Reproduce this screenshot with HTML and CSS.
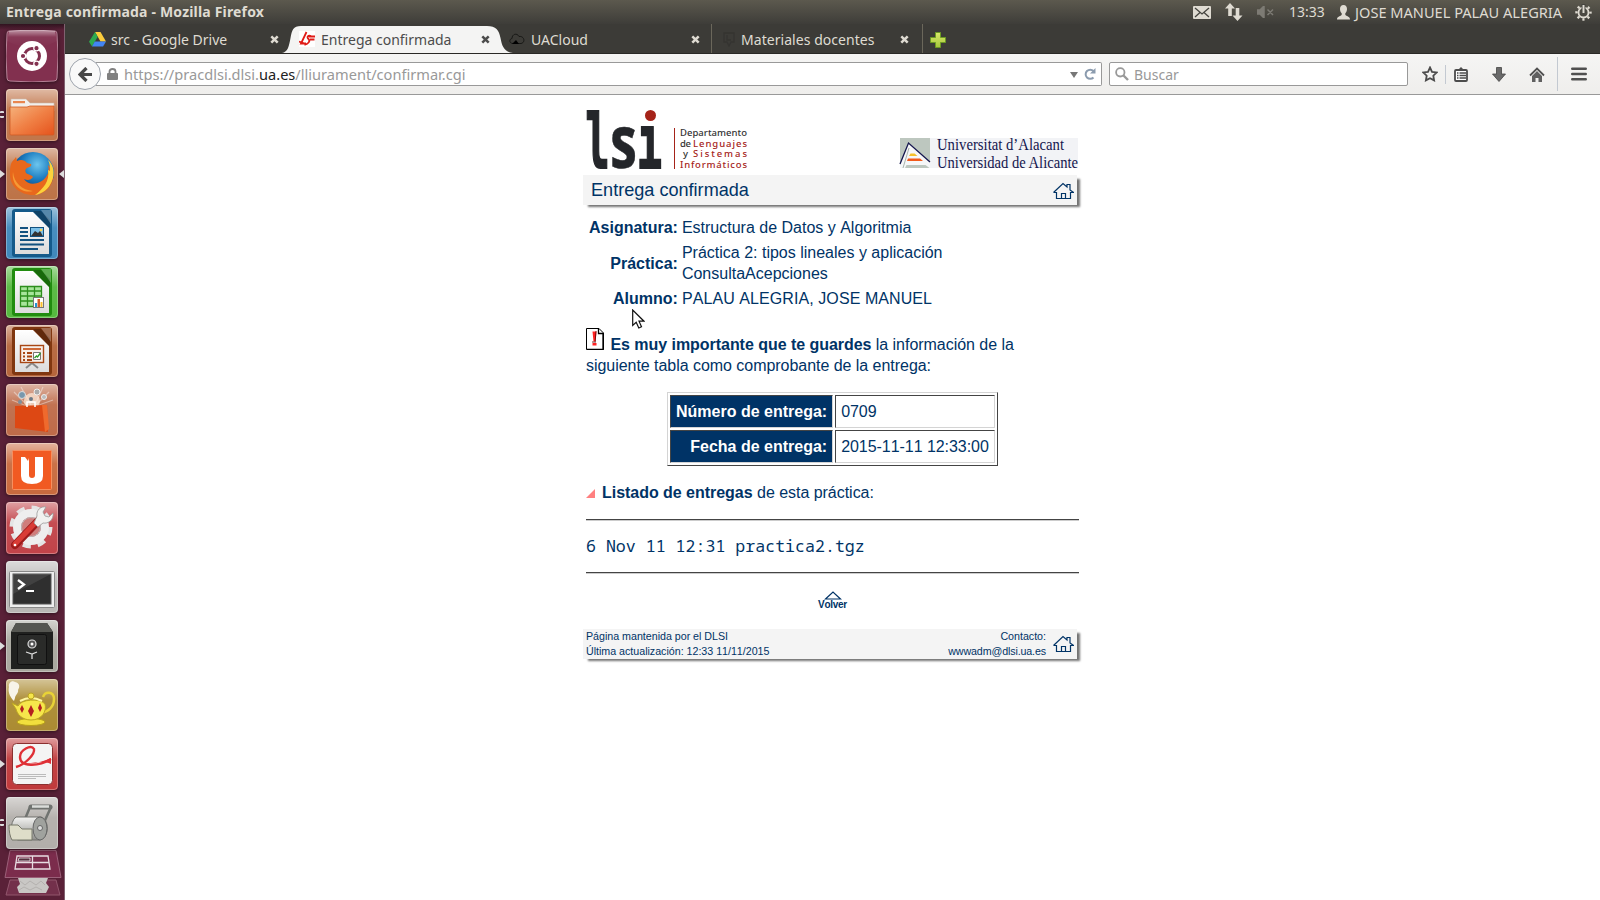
FILE: index.html
```html
<!DOCTYPE html>
<html lang="es">
<head>
<meta charset="utf-8">
<title>Entrega confirmada</title>
<link rel="stylesheet" href="styles.css">
</head>
<body>
<svg width="0" height="0" class="defs">
  <defs>
    <linearGradient id="shine" x1="0" y1="0" x2="0" y2="1"><stop offset="0" stop-color="#fff" stop-opacity=".5"/><stop offset=".4" stop-color="#fff" stop-opacity=".05"/><stop offset="1" stop-color="#fff" stop-opacity="0"/></linearGradient>
    <linearGradient id="folder" x1="0" y1="0" x2="1" y2="1"><stop offset="0" stop-color="#f5b27c"/><stop offset=".5" stop-color="#f08045"/><stop offset="1" stop-color="#e5531c"/></linearGradient>
    <linearGradient id="paper" x1="0" y1="0" x2="0" y2="1"><stop offset="0" stop-color="#fff"/><stop offset="1" stop-color="#dcdcdc"/></linearGradient>
    <linearGradient id="metal" x1="0" y1="0" x2="0" y2="1"><stop offset="0" stop-color="#f4f4f2"/><stop offset="1" stop-color="#8f8f8c"/></linearGradient>
    <radialGradient id="globe" cx=".6" cy=".3" r=".7"><stop offset="0" stop-color="#6cc5ee"/><stop offset=".5" stop-color="#1b7cc0"/><stop offset="1" stop-color="#0c2e68"/></radialGradient>
    <linearGradient id="plus" x1="0" y1="0" x2="0" y2="1"><stop offset="0" stop-color="#d9e86a"/><stop offset="1" stop-color="#a5c63b"/></linearGradient>
    <symbol id="close" viewBox="0 0 9 9"><path d="M1.3 1.3 7.7 7.7M7.7 1.3 1.3 7.7" stroke="currentColor" stroke-width="2.5"/></symbol>
    <symbol id="house" viewBox="0 0 21 18"><path d="M.5 10.500 10 1.500l4 3.500V2.500h3V8l3.500 2.500H17.500v6h-14v-6H.5M8.500 16.500v-5h4v5" fill="none" stroke="#036" stroke-width="1.200"/></symbol>
    <symbol id="shell" viewBox="0 0 52 52"><rect width="52" height="52" rx="4" fill="currentColor"/><rect width="52" height="52" rx="4" fill="url(#shine)"/><rect x=".5" y=".5" width="51" height="51" rx="3.500" fill="none" stroke="#fff" stroke-opacity=".3"/></symbol>
    <symbol id="doc" viewBox="0 0 52 52"><rect x="6" y="2" width="40" height="48" rx="3" fill="currentColor"/><path d="M9 5h18l16 16v26H9z" fill="url(#paper)"/><path d="M27 4h8l9 9v9z" fill="#000" opacity=".25"/><path d="M35 3h10v14z" fill="#fff" opacity=".28"/></symbol>
  </defs>
</svg>

<header class="panel">
  <span class="panel-title">Entrega confirmada - Mozilla Firefox</span>
  <div class="indicators">
    <svg class="i-mail" width="18" height="13" viewBox="0 0 18 13"><rect width="18" height="13" rx="1" fill="#dfdbd2"/><path d="M2 2l7 6 7-6M2 11l5-4.500M16 11l-5-4.500" fill="none" stroke="#45443f" stroke-width="1.300"/></svg>
    <svg class="i-net" width="18" height="18" viewBox="0 0 18 18"><path d="M5 0l5 5.500H6.800V13H3.200V5.500H0zM12.500 18l-5-5.500h3.200V5h3.600v7.500h3.200z" fill="#dfdbd2"/></svg>
    <svg class="i-vol" width="18" height="12" viewBox="0 0 18 12"><path d="M0 4h3l4-4v12L3 8H0zM10.500 3.500l5.500 5.500M16 3.500 10.500 9" fill="#7d7b74" stroke="#7d7b74" stroke-width="1.500"/></svg>
    <span class="clock">13:33</span>
    <svg class="i-user" width="13" height="15" viewBox="0 0 13 15"><path d="M6.500 0C9 0 10 1.700 10 4c0 2-.7 3.300-1.700 4.300v1.500c.8 1.700 4.700 1.200 4.700 4.700H0c0-3.500 3.900-3 4.700-4.700V8.300C3.700 7.300 3 6 3 4c0-2.300 1-4 3.500-4z" fill="#dfdbd2"/></svg>
    <span class="user">JOSE MANUEL PALAU ALEGRIA</span>
    <svg class="i-gear" width="17" height="17" viewBox="0 0 17 17"><circle cx="8.500" cy="8.500" r="5" fill="none" stroke="#dfdbd2" stroke-width="1.800"/><circle cx="8.500" cy="8.500" r="7" fill="none" stroke="#dfdbd2" stroke-width="2.400" stroke-dasharray="2.200 3.298" stroke-dashoffset="1.100"/><path d="M8.500 0v9" stroke="#45443f" stroke-width="4"/><path d="M8.500 1v8" stroke="#dfdbd2" stroke-width="2"/></svg>
  </div>
</header>

<div class="desktop">
  <nav class="launcher">
    <div class="tile"><svg viewBox="0 0 52 52"><path d="M3 1Q26-1 49 1q2 0 2 3 2 22 0 44 0 3-3 3-22 2-44 0-3 0-3-3Q-1 26 1 4q0-3 2-3z" fill="#82304f" stroke="#b58397"/><path d="M3 1Q26-1 49 1l2 10Q26 24 1 11z" fill="url(#shine)"/><circle cx="26" cy="26" r="15" fill="#fff"/><circle cx="26" cy="26" r="7.500" fill="none" stroke="#82304f" stroke-width="3"/><g fill="#82304f" stroke="#fff" stroke-width="1.200"><circle cx="17" cy="26" r="2.700"/><circle cx="30.500" cy="18.200" r="2.700"/><circle cx="30.500" cy="33.800" r="2.700"/></g></svg></div>
    <div class="tile"><i class="run pair"></i><svg viewBox="0 0 52 52" color="#c1764b"><use href="#shell"/><path d="M5 10h15l4 4h24v8H5z" fill="#f2efec" stroke="#c9b8ac" stroke-width=".6"/><path d="M7 12h12v2.200H7z" fill="#e8864f"/><path d="M4 18h17l3-1h24v28q0 1-1 1H5q-1 0-1-1z" fill="url(#folder)" stroke="#cf5a25" stroke-width=".8"/></svg></div>
    <div class="tile"><i class="run"></i><i class="focus"></i><svg viewBox="0 0 52 52" color="#bd7347"><use href="#shell"/><circle cx="27" cy="25" r="21" fill="url(#globe)"/><path d="M5 16c1-3 3-4 5-7l1 4c4-2 8-1 10 2l4 1c1 2-1 3-4 4-2 1-2 3-1 5 2 2 5 1 7 4-2 3-5 4-9 2 4 7 16 6 22-2 3-4 3-8 2-12 4 3 6 9 5 14-2 10-11 16-20 16C14 47 4 38 4 27c0-4 0-8 1-11z" fill="#e8681c"/><path d="M42 12c6 5 7 14 4 21-3 8-10 13-17 14 8-6 15-14 13-25l2 1c0-4 0-7-2-11z" fill="#fbd23c"/><path d="M7 24c1 11 9 18 20 19-11 3-22-6-20-19z" fill="#f69a35"/></svg></div>
    <div class="tile"><svg viewBox="0 0 52 52" color="#3f88bb"><use href="#shell"/><use href="#doc" color="#155a8a"/><path d="M14 21h8M14 25h8M14 29h8M14 33h24M14 37.500h24M14 42h18" stroke="#12517f" stroke-width="2"/><rect x="24.500" y="20.500" width="13" height="9" fill="#7cc0e8" stroke="#12517f"/><path d="M25 29l4-5 3 2 2-2 3 5z" fill="#333"/><circle cx="35" cy="23" r="1.300" fill="#fcd34f"/></svg></div>
    <div class="tile"><svg viewBox="0 0 52 52" color="#55b83e"><use href="#shell"/><use href="#doc" color="#218c0f"/><path d="M14 20.500h22v20H14z" fill="#a8e59b"/><path d="M14.500 20.500h21v20h-21zM14 25h22M14 30h22M14 35h22M21.500 20v21M28.500 20v21" fill="none" stroke="#2d8e1d" stroke-width="1.300"/><rect x="27.500" y="31.500" width="10" height="10" fill="#fff" stroke="#777"/><path d="M29 41v-4h2v4z" fill="#2693d1"/><path d="M31.500 41v-8h2.500v8z" fill="#d65c28"/><path d="M34.500 41v-5h2v5z" fill="#fbc02d"/></svg></div>
    <div class="tile"><svg viewBox="0 0 52 52" color="#b5653b"><use href="#shell"/><use href="#doc" color="#803710"/><path d="M20 43l6-5 6 5" fill="none" stroke="#888" stroke-width="2"/><rect x="14.500" y="20.500" width="23" height="17" fill="#f7efe9" stroke="#a84714" stroke-width="1.400"/><path d="M17 24h18" stroke="#ce6937" stroke-width="2"/><path d="M17 28h2M17 31.500h2M17 35h2M21 28h5M21 31.500h5M21 35h5" stroke="#a84714" stroke-width="2"/><path d="M27.500 27.500h7v7h-7z" fill="#fff" stroke="#777"/><path d="M28.500 33l2-2 1 1 3-4" stroke="#2b9d28" fill="none" stroke-width="1.300"/></svg></div>
    <div class="tile"><svg viewBox="0 0 52 52" color="#be6b49"><use href="#shell"/><path d="M8 8l14 14M43 8L29 22M15 3l10 18M37 3l-8 18M6 16l17 7M47 16l-17 6" stroke="#fff" stroke-width="1.200" opacity=".4"/><circle cx="26" cy="17" r="8" fill="#fff0df" opacity=".7"/><circle cx="16" cy="11" r="3.500" fill="#7898ad" stroke="#ddd"/><circle cx="31" cy="8" r="3" fill="#aaa" stroke="#eee"/><circle cx="38" cy="13" r="2.500" fill="#bbb" stroke="#eee"/><circle cx="25" cy="15" r="2" fill="#6c7a86"/><circle cx="14" cy="18" r="2" fill="#7e8e9b"/><path d="M9 22l32-1 1 27-33-4z" fill="#dd4814"/><path d="M41 21l2 24-4 3-3-27z" fill="#ef6a2d"/><path d="M21 23v-5h8v5" fill="none" stroke="#fff" stroke-width="1.500"/></svg></div>
    <div class="tile"><svg viewBox="0 0 52 52" color="#c86a3e"><use href="#shell"/><rect x="6.500" y="7.500" width="39" height="39" rx="1" fill="#f15a22" stroke="#f78f5f"/><path d="M15 14h4l3 4 1-3v17q0 3 3 3t3-3V14h8v19q0 8-11 8T15 33z" fill="#fff"/></svg></div>
    <div class="tile"><svg viewBox="0 0 52 52" color="#c14349"><use href="#shell"/><circle cx="25" cy="25" r="19" fill="none" stroke="#e4e4e4" stroke-width="5" stroke-dasharray="8 6.923"/><circle cx="25" cy="25" r="14" fill="none" stroke="#eee" stroke-width="8"/><circle cx="25" cy="25" r="9.500" fill="#cf7d7b" stroke="#bbb"/><path d="M9 43L33 18" stroke="#9e1b1b" stroke-width="8" stroke-linecap="round"/><path d="M9 42L33 17" stroke="#d93c36" stroke-width="5" stroke-linecap="round"/><path d="M31 14c-1-6 4-10 9-9l-3 5 2 4 4 1 4-4c1 7-5 11-10 10l-5 4-4-4z" fill="#f1f1ef" stroke="#999" stroke-width=".8"/><circle cx="9" cy="43" r="1.300" fill="#fff"/></svg></div>
    <div class="tile"><svg viewBox="0 0 52 52" color="#b9b7b5"><use href="#shell"/><rect x="3.500" y="10.500" width="45" height="36" rx="1" fill="#eee" stroke="#888"/><rect x="7" y="13" width="38" height="30" fill="#2f2f2f" stroke="#555"/><path d="M7 13h38L7 33z" fill="#fff" opacity=".09"/><path d="M12 19l6 4.500L12 28" fill="none" stroke="#fff" stroke-width="2.300"/><path d="M20 30h8" stroke="#fff" stroke-width="2"/></svg></div>
    <div class="tile"><i class="run"></i><svg viewBox="0 0 52 52" color="#a9a89f"><use href="#shell"/><path d="M10 3h31l6 9v37H5V12z" fill="#20211f"/><path d="M10 3h31l6 9H5z" fill="#555651"/><rect x="11.500" y="14.500" width="29" height="30" rx="2" fill="#2a2b29" stroke="#101010"/><circle cx="26" cy="24" r="4" fill="#555" stroke="#ddd" stroke-width="1.200"/><circle cx="26" cy="24" r="1.500" fill="#fff"/><path d="M20 32l6 2 5-2M26 34v5" stroke="#ddd" stroke-width="1.300" fill="none"/></svg></div>
    <div class="tile"><svg viewBox="0 0 52 52" color="#ab8b32"><use href="#shell"/><path d="M37 18c2-6 11-6 11 2 0 8-6 13-13 14" fill="none" stroke="#e8d237" stroke-width="2.500"/><ellipse cx="25" cy="43" rx="14" ry="3.500" fill="#f1df3d" stroke="#b7a01b"/><path d="M6 24l6 3c3-7 22-8 27-2 2 7-3 16-14 16-9 0-14-6-15-11z" fill="#f6e64b" stroke="#bda620"/><path d="M14 22q11-6 22 0" fill="none" stroke="#fff7a0" stroke-width="2"/><circle cx="25" cy="17" r="3" fill="#f6e64b" stroke="#bda620"/><path d="M25 26l3 6-3 6-3-6zM16 26l2 4-2 4-2-4zM34 24l2 5-2 4-2-4z" fill="#b42020"/><path d="M8 22C3 17 2 12 3 8c-1-4 3-7 6-5 5 1 5 5 3 8 1 3-3 5-3 8z" fill="#f7f4e9"/></svg></div>
    <div class="tile"><i class="run"></i><svg viewBox="0 0 52 52" color="#c03a3c"><use href="#shell"/><rect x="6.500" y="5.500" width="40" height="41" rx="4" fill="#f4f4f4" stroke="#8b3030"/><path d="M12 36.500h28M12 38.500h28M12 40.500h18" stroke="#bbb" stroke-width="1"/><path d="M10 29c10-3 19-13 18-18-3-5-14 1-14 8 0 10 18 10 31 2" fill="none" stroke="#df3036" stroke-width="2.400"/><path d="M21 25c8 1 15-1 24-5v6c-8-4-15-1-24-1z" fill="#df3036"/></svg></div>
    <div class="tile"><i class="run pair"></i><svg viewBox="0 0 52 52" color="#b2aeaa"><use href="#shell"/><path d="M19 22l5-12h21l-9 20" fill="none" stroke="#707370" stroke-width="2.500" stroke-linejoin="round"/><path d="M25 10h19" stroke="#707370" stroke-width="5" stroke-linecap="round"/><path d="M26 9.500h17" stroke="#dadcda" stroke-width="2.500"/><path d="M10 20h25c8 2 9 20-1 23H12C4 42 3 25 10 20z" fill="url(#metal)" stroke="#70716c"/><ellipse cx="34" cy="31.500" rx="7" ry="11.500" fill="#a0a29e" stroke="#666"/><circle cx="34" cy="31" r="2.500" fill="#ddd" stroke="#666"/><path d="M3 28h9l4 4h10v11H6q-3-5-3-15z" fill="#deddc9" stroke="#77786a"/></svg></div>
    <svg class="folded" width="58" height="47" viewBox="0 0 58 47"><path d="M6 30h46l4 15H2z" fill="#73304b" stroke="#92566d"/><path d="M14 28h30l-2 5 3 4-3 6H15l-2-6 3-3z" fill="#c9c7c5"/><path d="M16 31l5 4 5-4 6 4 5-4 4 4M15 40l5-3 6 3 6-3 6 3" stroke="#b4b1af" fill="none"/><path d="M6 .5h46l5 27H1z" fill="#7b2c4c" stroke="#9c6079"/><path d="M13 6h31l2 13H11zM28.500 6v13M12 12.500h33" fill="none" stroke="#e7dce1" stroke-width="1.300"/><path d="M15 8h11v3H14z" fill="#55303f" stroke="#fff" stroke-width=".7"/></svg>
  </nav>

  <div class="browser">
    <div class="tabs">
      <div class="tab t1">
        <svg width="17" height="15" viewBox="0 0 17 15"><path d="M6 0h5.500L17 9.500h-5.500z" fill="#fbcc3c"/><path d="M6 0l2.700 4.800L3 14.500 0 9.700z" fill="#2da94f"/><path d="M5.800 9.500H17l-2.900 5H3z" fill="#4285f4"/></svg>
        <span class="label">src - Google Drive</span><svg class="x" width="9" height="9"><use href="#close"/></svg>
      </div>
      <div class="tab t2">
        <svg class="curve" width="231" height="29" viewBox="0 0 231 29"><path d="M0 29C6 28 7 22 8.500 14S11 2 19 2h186c9 0 12 4 13.500 12S222 28 231 29z" fill="#f4f4f3"/></svg>
        <svg width="16" height="16" viewBox="0 0 16 16"><rect width="16" height="16" fill="#fff"/><path d="M7.500 1L2 12.500h5M0 10.500l7 2.500M12 5c-3-1-4.500 1-2.500 3s0 5-4 6M10 5.500h6M11 8.500h4.500" fill="none" stroke="#e01b16" stroke-width="1.800"/></svg>
        <span class="label">Entrega confirmada</span><svg class="x" width="9" height="9"><use href="#close"/></svg>
      </div>
      <div class="tab t3">
        <svg width="16" height="12" viewBox="0 0 16 12"><path d="M4 10.500C0 10.500 0 6 3 5.500 3 1 8-.5 10 3.500c5-1 7 6 2 7z" fill="none" stroke="#181816"/><path d="M3 11l4-4 3 4z" fill="#000"/></svg>
        <span class="label">UACloud</span><svg class="x" width="9" height="9"><use href="#close"/></svg>
      </div>
      <div class="tab t4">
        <svg width="12" height="16" viewBox="0 0 12 16"><path d="M1 2h10v9H8l-2 4-2-4H1zM4 4v5h4" fill="none" stroke="#353431" stroke-width="1.300"/></svg>
        <span class="label">Materiales docentes</span><svg class="x" width="9" height="9"><use href="#close"/></svg>
      </div>
      <svg class="add" width="16" height="16" viewBox="0 0 16 16"><path d="M5.500.5h5v5h5v5h-5v5h-5v-5h-5v-5h5z" fill="url(#plus)" stroke="#6c9a23"/></svg>
    </div>

    <div class="toolbar">
      <div class="back"><svg width="14" height="15" viewBox="0 0 14 15"><path d="M8.500 1L2 7.500 8.500 14M2.500 7.500H14" fill="none" stroke="#474747" stroke-width="3.200"/></svg></div>
      <div class="address">
        <svg width="11" height="12" viewBox="0 0 11 12"><path d="M2.500 6V3.500q0-2.500 3-2.500t3 2.500V6" fill="none" stroke="#808080" stroke-width="1.800"/><rect y="5" width="11" height="7" rx="1" fill="#808080"/></svg>
        <span class="url">https://pracdlsi.dlsi.<b>ua.es</b>/lliurament/confirmar.cgi</span>
        <svg class="drop" width="8" height="6" viewBox="0 0 8 6"><path d="M0 0h8L4 6z" fill="#777"/></svg>
        <svg width="12" height="12" viewBox="0 0 12 12"><path d="M9.500 9.500A4.600 4.600 0 1 1 9.500 3" fill="none" stroke="#8b9bae" stroke-width="2"/><path d="M11.500 0v5.500H6z" fill="#8b9bae"/></svg>
      </div>
      <div class="search">
        <svg width="14" height="14" viewBox="0 0 14 14"><circle cx="5.300" cy="5.300" r="4.200" fill="none" stroke="#999" stroke-width="1.800"/><path d="M8.500 8.500l4.500 4.500" stroke="#999" stroke-width="2.400"/></svg>
        <span>Buscar</span>
      </div>
      <svg class="b-star" width="16" height="16" viewBox="0 0 16 16"><path d="M8 1.500l2 4.300 4.700.6-3.400 3.300.8 4.700L8 12.200l-4.100 2.200.8-4.700L1.300 6.400 6 5.800z" fill="none" stroke="#4c4c4c" stroke-width="1.800"/></svg>
      <i class="rule short"></i>
      <svg class="b-list" width="14" height="15" viewBox="0 0 14 15"><rect x="1" y="3" width="12" height="11" rx="1" fill="#fff" stroke="#4c4c4c" stroke-width="1.800"/><path d="M4 3l3-3 3 3z" fill="#4c4c4c"/><path d="M3 6h1.500M3 8.500h1.500M3 11h1.500M5.500 6H12M5.500 8.500H12M5.500 11H12" stroke="#4c4c4c" stroke-width="1.300"/></svg>
      <svg class="b-down" width="14" height="15" viewBox="0 0 14 15"><path d="M4.500.5h5V7h4L7 14.500.5 7h4z" fill="#6a6a6a" stroke="#444" stroke-width=".8"/></svg>
      <svg class="b-home" width="16" height="15" viewBox="0 0 16 15"><path d="M1 8.500L8 1.500l7 7" fill="none" stroke="#505050" stroke-width="1.800"/><path d="M3 9l5-5 5 5v6h-3.500v-4h-3v4H3z" fill="#606060"/></svg>
      <i class="rule"></i>
      <svg class="b-menu" width="16" height="14" viewBox="0 0 16 14"><path d="M1.300 1.800h13.400M1.300 7h13.400M1.300 12.200h13.400" stroke="#505050" stroke-width="2.600" stroke-linecap="round"/></svg>
    </div>

    <main class="page">
      <div class="logos">
        <svg width="164" height="61" viewBox="0 0 164 61">
          <g class="lsi">
            <text x="-.5" y="57.500" textLength="24" lengthAdjust="spacingAndGlyphs">l</text>
            <text class="s" x="24" y="58" textLength="27" lengthAdjust="spacingAndGlyphs">s</text>
            <text x="51" y="57.500" textLength="25" lengthAdjust="spacingAndGlyphs">ı</text>
          </g>
          <circle cx="64.500" cy="5.500" r="5.500" fill="#a52319"/>
          <path d="M88.500 18v41" stroke="#a52319"/>
          <g class="dept">
            <text x="94" y="25.500" textLength="67">Departamento</text>
            <text x="94" y="36.500" textLength="11">de</text><text class="red" x="107" y="36.500" textLength="54">Lenguajes</text>
            <text x="97" y="46.500">y</text><text class="red" x="107" y="46.500" textLength="54">Sistemas</text>
            <text class="red" x="94" y="57.500" textLength="67">Informáticos</text>
          </g>
        </svg>
        <svg class="ua-logo" width="178" height="30" viewBox="0 0 178 30">
          <rect width="178" height="30" fill="#f2f3f6"/><rect width="30" height="30" fill="#bdc7bf"/>
          <path d="M0 27L8.500 5 30 24v6H0z" fill="#f6f7f8"/><path d="M0 26L8.500 5 30 24" fill="none" stroke="#15164e" stroke-width="1.300"/><path d="M3 30L9 10" stroke="#a9b3ad"/>
          <path d="M9 18l1.500-2.500h4L17.500 18z" fill="#f5c02b"/><path d="M7 23l1-2.500h12l3 2.500z" fill="#f25a1b"/><path d="M5 30l1.500-3h19l4 3z" fill="#bdc7bf"/>
          <g class="ua"><text x="37" y="12" textLength="127" lengthAdjust="spacingAndGlyphs">Universitat d’Alacant</text><text x="37" y="29.500" textLength="141" lengthAdjust="spacingAndGlyphs">Universidad de Alicante</text></g>
        </svg>
      </div>

      <div class="bar heading"><h1>Entrega confirmada</h1><svg width="21" height="18"><use href="#house"/></svg></div>

      <table class="info">
        <tr><th>Asignatura:</th><td>Estructura de Datos y Algoritmia</td></tr>
        <tr><th>Práctica:</th><td>Práctica 2: tipos lineales y aplicación<br>ConsultaAcepciones</td></tr>
        <tr><th>Alumno:</th><td class="student">PALAU ALEGRIA, JOSE MANUEL</td></tr>
      </table>

      <p class="notice"><svg width="18" height="22" viewBox="0 0 18 22"><path d="M.5.500H13L17.500 5v16.500H.5z" fill="#fff" stroke="#000"/><path d="M12.500.500v5h5M17 5v16.500H1" fill="none" stroke="#000" stroke-width="1.300"/><path d="M6.500 3.500h4l-1 10h-2zM6.500 15h4v2.500h-4z" fill="#f22"/><path d="M10 3l-.8 10.500M6 14h4" stroke="#500" stroke-width=".8"/></svg> <b>Es muy importante que te guardes</b> la información de la<br>siguiente tabla como comprobante de la entrega:</p>

      <table class="receipt">
        <tr><th>Número de entrega:</th><td>0709</td></tr>
        <tr><th>Fecha de entrega:</th><td>2015-11-11 12:33:00</td></tr>
      </table>

      <p class="listing"><svg width="9" height="9" viewBox="0 0 9 9"><path d="M9 0v9H0z" fill="#ff8080"/></svg><b>Listado de entregas</b>&nbsp;de esta práctica:</p>
      <div class="files">6 Nov 11 12:31 practica2.tgz</div>

      <div class="volver"><svg width="18" height="9" viewBox="0 0 18 9"><path d="M1.500 8L9 1l7.500 7z" fill="none" stroke="#036" stroke-width="1.200"/></svg><span>Volver</span></div>

      <footer class="bar foot">
        <div>Página mantenida por el DLSI<br>Última actualización: 12:33 11/11/2015</div>
        <div class="contact">Contacto:<br><span class="mail">wwwadm@dlsi.ua.es</span></div>
        <svg width="21" height="18"><use href="#house"/></svg>
      </footer>
    </main>
  </div>
</div>
<svg class="cursor" width="13" height="20" viewBox="0 0 13 20"><path d="M.7 1v15.500l3.500-3.200 2.600 5.700 2.700-1.200L7 12.200h5z" fill="#fff" stroke="#111" stroke-width="1.200"/></svg>
</body>
</html>
```
FILE: styles.css
```css
* { box-sizing: border-box; }
body { margin: 0; width: 1600px; height: 900px; overflow: hidden; background: #fff; font-family: "Noto Sans", sans-serif; }
svg { display: block; flex: none; }
.defs { position: absolute; }

/* top panel */
.panel { height: 24px; display: flex; align-items: center; padding-left: 6px; background: linear-gradient(#5c594e, #3e3d39); color: #dfdbd2; font-size: 14px; line-height: 24px; white-space: nowrap; }
.panel-title { font-weight: 700; letter-spacing: .18px; }
.indicators { margin-left: auto; display: flex; align-items: center; padding-right: 8px; }
.i-net { margin-left: 14px; }
.i-vol { margin-left: 14px; }
.clock { margin-left: 14px; width: 36px; }
.i-user { margin-left: 12px; }
.user { margin-left: 5px; width: 208px; font-size: 14.600px; }
.i-gear { margin-left: 12px; }

.desktop { display: flex; height: 876px; }

/* launcher */
.launcher { width: 65px; flex: none; display: flex; flex-direction: column; gap: 7px; padding: 6px 0 0 6px; background: linear-gradient(#30131f, #5a2138 6px); border-right: 1px solid #806170; overflow: hidden; }
.tile { position: relative; width: 52px; height: 52px; flex: none; filter: drop-shadow(0 1px 2px rgba(0,0,0,.5)); }
.run, .focus { position: absolute; top: 22px; width: 0; height: 0; border: 4px solid transparent; }
.run { left: -6px; border-left: 5px solid #ddd; border-right: 0; }
.focus { right: -6px; border-right: 5px solid #ddd; border-left: 0; }
.run.pair { width: 4px; height: 7px; border: solid #ddd; border-width: 2px 0; border-radius: 1px; }
.folded { margin: -6px 0 0 -2px; }

/* tab strip */
.browser { flex: 1; min-width: 0; }
.tabs { height: 30px; display: flex; align-items: center; background: #3c3b37; border-bottom: 1px solid #2a2926; color: #dfdbd2; font-size: 14px; }
.tab { position: relative; height: 29px; display: flex; align-items: center; padding-top: 1px; white-space: nowrap; }
.tab > * { position: relative; }
.tab .label { margin-left: 6px; }
.tab .x { margin-left: auto; }
.t1 { width: 222px; padding-left: 24px; padding-right: 8px; }
.t1 .label { margin-left: 5px; }
.t2 { width: 219px; padding-left: 12px; padding-right: 16px; color: #4c4c4c; }
.tab .curve { position: absolute; left: -5px; top: 0; }
.t3 { width: 206px; padding-left: 3px; padding-right: 11px; border-right: 1px solid #6b675b; }
.t4 { width: 211px; padding-left: 11px; padding-right: 13px; border-right: 1px solid #6b675b; }
.t4 .label { letter-spacing: .05px; }
.add { margin: 3px 0 0 7px; }

/* navigation toolbar */
.toolbar { height: 41px; display: flex; align-items: center; background: linear-gradient(#f5f5f4, #efeeec); border-bottom: 1px solid #999; font-size: 14px; padding-left: 4px; }
.back { position: relative; width: 32px; height: 32px; flex: none; border: 1px solid #9da3ac; border-radius: 50%; background: #f9f9f9; display: flex; align-items: center; justify-content: center; z-index: 1; }
.address, .search { height: 24px; border: 1px solid #999; background: #fff; display: flex; align-items: center; color: #999; }
.address { width: 1006px; margin-left: -5px; padding: 0 5px 0 11px; border-radius: 0 2px 2px 0; border-left: 0; }
.url { margin-left: 6px; font-size: 14.600px; }
.url b { font-weight: 400; color: #222; }
.drop { margin: 2px 6px 0 auto; }
.search { width: 299px; margin-left: 7px; padding-left: 5px; border-radius: 2px; }
.search span { margin-left: 5px; }
.b-star { margin-left: 14px; }
.rule { width: 1px; height: 34px; background: #c3c9d1; margin-left: 12px; }
.rule.short { height: 19px; margin-left: 7px; }
.b-list { margin-left: 8px; }
.b-down { margin-left: 24px; }
.b-home { margin-left: 23px; }
.b-menu { margin-left: 13px; }

/* document */
.page { width: 497px; margin-left: 518px; padding-top: 15px; color: #036; font: 16px/21px "Liberation Sans", Arial, sans-serif; font-kerning: none; }
.logos { display: flex; justify-content: space-between; align-items: flex-end; height: 58px; padding: 0 2px 0 3px; }
.logos > svg { overflow: visible; }
.logos > svg:first-child { align-self: flex-start; }
.lsi { font: bold 74px "DejaVu Sans Mono", monospace; fill: #24262a; stroke: #24262a; stroke-width: 2px; }
.lsi .s { font-family: "Open Sans", sans-serif; stroke-width: .5px; }
.dept { font: 500 9.5px "Noto Sans", sans-serif; fill: #333; }
.dept .red { fill: #a52319; }
.ua { font: 16.500px "Liberation Serif", serif; fill: #15164e; }
.bar { width: 494px; height: 30px; display: flex; align-items: center; background: #f4f4f4; box-shadow: 4px 3px 2px -1px rgba(0,0,0,.55); }
.heading { margin-top: 7px; padding: 0 3px 0 8px; }
.heading svg { margin-top: 1px; }
.heading h1 { margin: 0 auto 0 0; font-size: 18.100px; font-weight: 400; }
.info { margin: 9px 0 0 3px; border-spacing: 2px; }
.info th { text-align: right; padding: 1px; }
.info td { padding: 1px; }
.info .student { letter-spacing: .08px; }
.notice { margin: 16px 0 0 3px; white-space: nowrap; letter-spacing: -.04px; }
.notice svg { display: inline-block; vertical-align: 0; margin-right: 2px; }
.receipt { margin: 16px 0 0 84px; border: 1px solid; border-color: #d4d4d4 #444 #444 #d4d4d4; border-spacing: 2px; }
.receipt th, .receipt td { height: 33px; padding: 5px; border: 1px solid; border-color: #444 #d4d4d4 #d4d4d4 #444; white-space: nowrap; }
.receipt td { letter-spacing: -.05px; }
.receipt th { background: #036; color: #fff; text-align: right; }
.listing { display: flex; align-items: center; margin: 16px 0 0 3px; letter-spacing: -.03px; }
.listing svg { margin: 2px 7px 0 0; }
.files { margin: 16px 0 0 3px; width: 493px; height: 54px; padding-top: 15px; border: solid #444; border-width: 1px 0; box-shadow: 0 1px #ccc, inset 0 1px #ccc; font: 16.600px/21px "Noto Sans Mono", "DejaVu Sans Mono", monospace; white-space: pre; }
.volver { margin: 18px 0 0 3px; width: 493px; display: flex; flex-direction: column; align-items: center; font-size: 10px; letter-spacing: -.3px; font-weight: 700; line-height: 10px; }
.foot { margin-top: 19px; padding: 0 3px; font-size: 10.700px; line-height: 15px; letter-spacing: -.02px; }
.contact { margin: 0 7px 0 auto; text-align: right; }
.mail { letter-spacing: -.13px; }
.cursor { position: absolute; left: 632px; top: 309px; }
```
